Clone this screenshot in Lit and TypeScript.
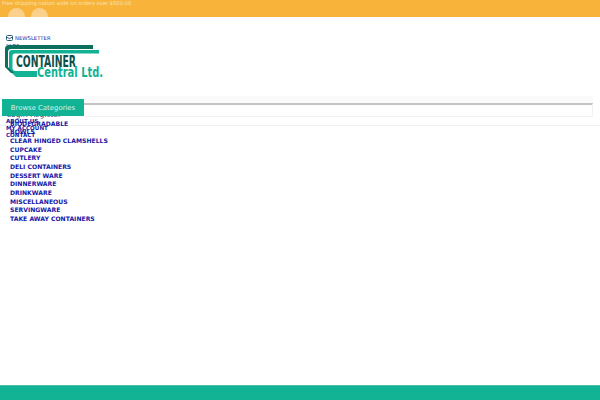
import { LitElement, html, css } from "lit";
import { customElement } from "lit/decorators.js";

const cats = ["BIODEGRADABLE","BOWLS","CLEAR HINGED CLAMSHELLS","CUPCAKE","CUTLERY","DELI CONTAINERS","DESSERT WARE","DINNERWARE","DRINKWARE","MISCELLANEOUS","SERVINGWARE","TAKE AWAY CONTAINERS"];
const links = ["ABOUT US","MY ACCOUNT","CONTACT"];

@customElement("app-root")
export class AppRoot extends LitElement {
  static styles = css`
    :host { display: block; width: 600px; height: 400px; overflow: hidden; position: relative; background: #fff; font-family: "DejaVu Sans", sans-serif; }
    .top { height: 17px; background: #f8b33a; overflow: hidden; padding-left: 2px; box-sizing: border-box; }
    .top p { margin: 0; font-size: 5.2px; line-height: 6px; color: #fbe3b4; white-space: nowrap; }
    .circles { display: flex; gap: 6px; margin: 2px 0 0 6px; }
    .circles i { width: 17px; height: 17px; border-radius: 50%; background: #fad08a; display: block; }
    .news { display: flex; align-items: center; gap: 2px; margin: 17px 0 0 6px; height: 7px; font-size: 5.3px; color: #2b2b96; }
    .faq { margin: 2px 0 0 6px; height: 2px; font-size: 5.3px; line-height: 7px; color: #2b2b96; overflow: hidden; }
    .logo { display: block; }
    .logo text { font-family: "DejaVu Sans", sans-serif; font-weight: 700; }
    .search { display: flex; margin: 20px 0 0 2px; height: 17px; position: relative; z-index: 1; }
    .browse { width: 82px; background: #12b294; color: #d8f3ec; font-size: 6.9px; display: flex; align-items: center; justify-content: center; }
    .bar { width: 509px; height: 14px; box-sizing: border-box; border-top: 2px solid #c4c4c4; border-right: 1px solid #f1f1f1; border-bottom: 1px solid #f3f3f3; margin-top: 4px; box-shadow: 0 -7px 0 0 #fafafa; }
    .rule { height: 1px; background: #f1f1f1; margin-top: 9px; }
    .login { margin: -15px 0 0 7px; height: 8px; font-size: 7.6px; line-height: 8px; color: #4a4a7a; }
    .links { margin: -1.5px 0 0 6px; height: 0; }
    .links a { display: block; height: 7px; font-size: 5.6px; line-height: 7px; font-weight: 700; color: #1c1c9c; }
    .cats { list-style: none; margin: 2.2px 0 0 10px; padding: 0; }
    .cats li { height: 8.67px; font-size: 6.1px; line-height: 8.67px; font-weight: 700; color: #1717a8; white-space: nowrap; }
    .foot { position: absolute; left: 0; right: 0; bottom: 0; height: 15px; box-sizing: border-box; background: #12b294; border-top: 1px solid #4cbfa9; }
  `;
  render() {
    return html`
      <div class="top">
        <p>Free shipping nation wide on orders over $500.00</p>
        <div class="circles"><i></i><i></i></div>
      </div>
      <div class="news">
        <svg width="7" height="6" viewBox="0 0 7 6" fill="none" stroke="#2b5a7a" stroke-width="1"><rect x=".5" y=".5" width="6" height="5" rx="1"/><path d="M.5 2 3.5 3.7 6.500 2"/></svg>
        <span>NEWSLETTER</span>
      </div>
      <div class="faq">FAQS</div>
      <svg class="logo" width="105" height="34" viewBox="0 0 105 34">
        <path d="M99 5V8.500H15Q12.500 8.500 12.500 11V23Q12.500 26 16 26H37V32H16L9 25V8Q9 5 12 5Z" fill="#12b294"/>
        <path d="M93 0V4H11Q8 4 8 7V22L14 28H11L5 22V4Q5 0 9 0Z" fill="#0d6f5f"/>
        <text x="16" y="22" font-size="15.500" fill="#0d4f4a" textLength="60" lengthAdjust="spacingAndGlyphs">CONTAINER</text>
        <text x="37" y="31.500" font-size="14" fill="#12b294" textLength="66" lengthAdjust="spacingAndGlyphs">Central Ltd.</text>
      </svg>
      <div class="search"><div class="browse">Browse Categories</div><div class="bar"></div></div>
      <div class="rule"></div>
      <div class="login">Login Register</div>
      <div class="links">${links.map((l) => html`<a>${l}</a>`)}</div>
      <ul class="cats">${cats.map((c) => html`<li>${c}</li>`)}</ul>
      <div class="foot"></div>
    `;
  }
}
